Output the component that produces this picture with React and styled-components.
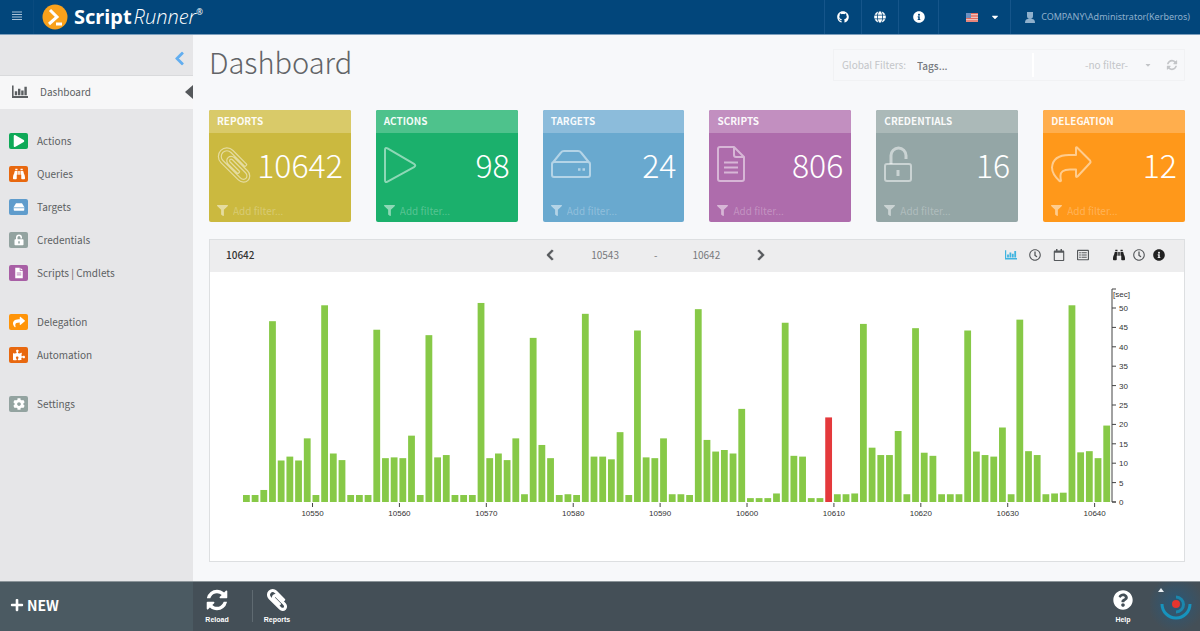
import React from "react";
import {
  FaBinoculars,
  FaCaretDown,
  FaChevronLeft,
  FaChevronRight,
  FaCog,
  FaFilter,
  FaGithub,
  FaGlobe,
  FaInfoCircle,
  FaPlay,
  FaPlus,
  FaPuzzlePiece,
  FaQuestionCircle,
  FaRegCalendar,
  FaRegClock,
  FaRegListAlt,
  FaShare,
} from "react-icons/fa";
import styled, { createGlobalStyle } from "styled-components";

const tiles = [
  { name: "Reports", count: 10642, color: "#cbb93f", head: "#d9ca69", icon: "clip" },
  { name: "Actions", count: 98, color: "#1bb06c", head: "#4ec28c", icon: "play" },
  { name: "Targets", count: 24, color: "#69a9cf", head: "#8cbcdb", icon: "disk" },
  { name: "Scripts", count: 806, color: "#ae6cac", head: "#c28fc0", icon: "file" },
  { name: "Credentials", count: 16, color: "#94a6a6", head: "#abb9b8", icon: "lock" },
  { name: "Delegation", count: 12, color: "#ff981a", head: "#ffae4d", icon: "share" },
];

// run time in seconds for every report, starting with 10542
const runs = [
  1.8, 1.8, 3.1, 46.6, 10.7, 11.7, 10.7, 16.4, 1.8, 50.7, 12.5, 10.8, 1.8, 1.8,
  1.8, 44.4, 11.3, 11.5, 11.3, 17.1, 1.8, 43, 11.5, 12.1, 1.8, 1.8, 1.8, 51.3,
  11.3, 12.5, 10.8, 16.4, 2, 42.3, 14.7, 11.3, 1.8, 2, 1.8, 48.5, 11.7, 11.7,
  11, 18, 1.8, 44.2, 11.5, 11.3, 16.4, 2, 2, 1.8, 49.7, 16, 13, 13.4, 12.5, 24,
  1, 1, 1, 2.2, 46.2, 11.9, 11.7, 1, 1, 21.8, 2, 2, 2.2, 45.9, 14, 12.1, 12.1,
  18.3, 2, 44.8, 12.7, 11.9, 2, 2, 2, 44.2, 13, 12.1, 11.7, 19.2, 2, 47, 13.1,
  12.1, 2, 2.2, 2.4, 50.7, 12.8, 13.1, 11.3, 19.7,
];
const firstRun = 10542;
const failedRun = 10609;

const Refresh = () => (
  <svg viewBox="0 0 1792 1792" width="1em" height="1em" fill="currentColor" aria-hidden="true">
    <path d="M1639 1056q0 5-1 7-64 268-268 434.5t-478 166.5q-146 0-282.5-55t-243.5-157l-129 129q-19 19-45 19t-45-19-19-45v-448q0-26 19-45t45-19h448q26 0 45 19t19 45-19 45l-137 137q71 66 161 102t187 36q134 0 250-65t186-179q11-17 53-117 8-23 30-23h192q13 0 22.5 9.5t9.5 22.5zm25-800v448q0 26-19 45t-45 19h-448q-26 0-45-19t-19-45 19-45l138-138q-148-137-349-137-134 0-250 65t-186 179q-11 17-53 117-8 23-30 23h-199q-13 0-22.5-9.5t-9.5-22.5v-7q65-268 270-434.5t480-166.5q146 0 284 55.5t245 156.5l130-129q19-19 45-19t45 19 19 45z" />
  </svg>
);

const clipPath =
  "M1596 1385q0 117-79 196t-196 79q-135 0-235-100l-777-776q-113-115-113-271 0-159 110-270t269-111q158 0 273 113l605 606q10 10 10 22 0 16-30.500 46.500t-46.500 30.500q-13 0-23-10l-606-607q-79-77-181-77-106 0-179 75t-73 181q0 105 76 181l776 777q63 63 145 63 64 0 106-42t42-106q0-82-63-145l-581-581q-26-24-60-24-29 0-48 19t-19 48q0 32 25 59l410 410q10 10 10 22 0 16-31 47t-47 31q-12 0-22-10l-410-410q-63-61-63-149 0-82 57-139t139-57q88 0 149 63l581 581q100 98 100 235z";

const Clip = () => (
  <svg viewBox="0 0 1792 1792" width="1em" height="1em" fill="currentColor" stroke="currentColor" strokeWidth="100" aria-hidden="true">
    <path d={clipPath} />
  </svg>
);

const BarChart = () => (
  <svg viewBox="0 0 20 16" width="1em" height="1em" fill="currentColor" aria-hidden="true">
    <path d="M0 0h2v13h18v2.500H0zM3.500 7h3v5h-3zM7.500 4h3v8h-3zM11.500 6h3v6h-3zM15.500 1.500h3V12h-3z" />
  </svg>
);

const Disk = () => (
  <svg viewBox="0 0 16 16" width="1em" height="1em" fill="currentColor" aria-hidden="true">
    <path d="M4 3h8l3 5v4a1 1 0 0 1-1 1H2a1 1 0 0 1-1-1V8z" />
    <path d="M1 9h14" stroke="#5f9ccc" strokeWidth="1" />
  </svg>
);

const Lock = () => (
  <svg viewBox="0 0 16 16" width="1em" height="1em" aria-hidden="true">
    <path d="M5 8V4.500a3 3 0 0 1 6 0V6" fill="none" stroke="currentColor" strokeWidth="2" />
    <rect x="2" y="7" width="12" height="8" rx="1" fill="currentColor" />
    <path d="M8 9.500v3" stroke="#93a3a0" strokeWidth="2" />
  </svg>
);

const Script = () => (
  <svg viewBox="0 0 16 16" width="1em" height="1em" fill="currentColor" aria-hidden="true">
    <path d="M3 1h6v4h4v10H3zM10 1l3 3h-3z" />
    <path d="M5 8h6M5 10.500h6" stroke="#a85fa5" strokeWidth="1" />
  </svg>
);

const outlines = {
  clip: <path d={clipPath} transform="translate(-3 -1) scale(.0224)" strokeWidth="54" />,
  play: <path d="M1 4v30q0 3 2.500 1.700L30 21.200q2.500-1.700 0-3.300L3.500 2.300Q1 1 1 4z" />,
  disk: (
    <>
      <path d="M1 18v11q0 2 2 2h34q2 0 2-2V18q0-2-2-2H3q-2 0-2 2zM1.500 17 10 6.500Q11 5 13 5h14q2 0 3 1.500L38.500 17" />
      <path d="M27 23.500h2.500M31.500 23.500H34" strokeWidth="2.500" />
    </>
  ),
  file: (
    <path d="M17 1H3Q1 1 1 3v30q0 2 2 2h22q2 0 2-2V11zM17 1v8q0 2 2 2h8M7 16.500h14M7 21.500h14M7 26.500h14" />
  ),
  lock: (
    <>
      <path d="M7 18v-8.500a7.500 7.500 0 0 1 15 0V13" strokeWidth="3" />
      <path d="M3 18h22q2 0 2 2v13q0 2-2 2H3q-2 0-2-2V20q0-2 2-2z" />
      <path d="M14 24v6" strokeWidth="3" />
    </>
  ),
  share: (
    <path d="M25 2q0-1 1-.500l13 13q1 1.500 0 2.500L26.500 30.500Q25 31.500 25 30v-6.500h-6q-10 0-9.500 7 0 2 .500 4 0 1-1.500.500Q1 28 1 21.500 2 9 18 9h7z" />
  ),
};

const Chart = () => (
  <ChartSvg viewBox="0 0 974 289" role="img" aria-label="Run time per report">
    {runs.map((sec, i) => (
      <rect
        key={i}
        x={33 + i * 8.69}
        y={230 - sec * 3.88}
        width="6.8"
        height={sec * 3.88}
        fill={firstRun + i === failedRun ? "#e4393c" : "#87c947"}
      />
    ))}
    {[10550, 10560, 10570, 10580, 10590, 10600, 10610, 10620, 10630, 10640].map((n) => {
      const x = 33 + (n - firstRun) * 8.69;
      return (
        <g key={n}>
          <path d={`M${x} 231v4`} />
          <text x={x} y="244" textAnchor="middle">
            {n}
          </text>
        </g>
      );
    })}
    <path d="M906 17H902V230H906" />
    {[0, 5, 10, 15, 20, 25, 30, 35, 40, 45, 50].map((n) => (
      <g key={n}>
        <path d={`M902 ${230 - n * 3.88}h4`} />
        <text x="909" y={233 - n * 3.88}>
          {n}
        </text>
      </g>
    ))}
    <text x="903" y="25">
      [sec]
    </text>
  </ChartSvg>
);

export default function App() {
  return (
    <Page>
      <GlobalStyle />
      <TopBar>
        <MenuButton type="button" aria-label="Menu">
          <svg viewBox="0 0 10 10" width="10" height="10" stroke="currentColor" aria-hidden="true">
            <path d="M0 1h10M0 3.500h10M0 6h10M0 8.500h10" />
          </svg>
        </MenuButton>
        <Brand href="#">
          <svg viewBox="0 0 26 26" width="26" height="26" fill="none" aria-hidden="true">
            <circle cx="13" cy="13" r="12.500" fill="#f9a11b" />
            <path d="M8 6l7 7-8 7M14 20h6" stroke="#fff" strokeWidth="3" />
          </svg>
          <BrandName>
            <b>Script</b>
            <i>Runner</i>
            <sup>®</sup>
          </BrandName>
        </Brand>
        <TopLink href="#" aria-label="GitHub"><FaGithub /></TopLink>
        <TopLink href="#" aria-label="Website"><FaGlobe /></TopLink>
        <TopLink href="#" aria-label="Info" $wide><FaInfoCircle /></TopLink>
        <Language type="button" aria-label="Language">
          <svg viewBox="0 0 12 9" width="12" height="9" aria-hidden="true">
            <path d="M0 0h12v9H0z" fill="#f4ddd8" />
            <path d="M0 .500h12M0 3h12M0 5.500h12M0 8h12" stroke="#e2695c" strokeWidth="1.300" />
            <path d="M0 0h5v5H0z" fill="#6d8fc0" />
          </svg>
          <FaCaretDown />
        </Language>
        <User>
          <svg viewBox="0 0 10 11" width="10" height="11" fill="currentColor" aria-hidden="true">
            <path d="M2 0h6v4q0 3-3 3T2 4zM0 11q0-4 3-4h4q3 0 3 4z" />
          </svg>
          COMPANY\Administrator(Kerberos)
        </User>
      </TopBar>

      <Body>
        <Sidebar>
          <Collapse type="button" aria-label="Collapse"><FaChevronLeft /></Collapse>
          <ActiveLink href="#">
            <BarChart />
            <span>Dashboard</span>
            <Marker />
          </ActiveLink>
          <NavGroup>
            <NavLink href="#"><NavIcon $color="#0fa958"><FaPlay /></NavIcon>Actions</NavLink>
            <NavLink href="#"><NavIcon $color="#e8680f"><FaBinoculars /></NavIcon>Queries</NavLink>
            <NavLink href="#"><NavIcon $color="#5f9ccc"><Disk /></NavIcon>Targets</NavLink>
            <NavLink href="#"><NavIcon $color="#93a3a0"><Lock /></NavIcon>Credentials</NavLink>
            <NavLink href="#"><NavIcon $color="#a85fa5"><Script /></NavIcon>Scripts | Cmdlets</NavLink>
          </NavGroup>
          <NavGroup>
            <NavLink href="#"><NavIcon $color="#ff9408"><FaShare /></NavIcon>Delegation</NavLink>
            <NavLink href="#"><NavIcon $color="#e8680f"><FaPuzzlePiece /></NavIcon>Automation</NavLink>
          </NavGroup>
          <NavGroup>
            <NavLink href="#"><NavIcon $color="#93a3a0"><FaCog /></NavIcon>Settings</NavLink>
          </NavGroup>
        </Sidebar>

        <Main>
          <TitleRow>
            <h1>Dashboard</h1>
            <Filters>
              <label htmlFor="tags">Global Filters:</label>
              <TagInput id="tags" placeholder="Tags..." />
              <FilterSelect aria-label="Filter" defaultValue="none">
                <option value="none">-no filter-</option>
              </FilterSelect>
              <FaCaretDown size={8} />
              <PlainButton type="button" aria-label="Refresh filters"><Refresh /></PlainButton>
            </Filters>
          </TitleRow>

          <Tiles>
            {tiles.map((tile) => (
              <Tile key={tile.name} $color={tile.color}>
                <TileHead $color={tile.head}>{tile.name}</TileHead>
                <TileBody>
                  <svg viewBox="-1 -1 42 38" width="42" height="38" aria-hidden="true">
                    {outlines[tile.icon]}
                  </svg>
                  <TileCount>{tile.count}</TileCount>
                </TileBody>
                <TileFilter>
                  <FaFilter />
                  <input placeholder="Add filter..." aria-label={`Filter ${tile.name}`} />
                </TileFilter>
              </Tile>
            ))}
          </Tiles>

          <Panel>
            <PanelHead>
              <strong>10642</strong>
              <Pager>
                <PlainButton type="button" aria-label="Previous" $color="#55585b"><FaChevronLeft /></PlainButton>
                <span>10543</span>
                <span>-</span>
                <span>10642</span>
                <PlainButton type="button" aria-label="Next" $color="#55585b"><FaChevronRight /></PlainButton>
              </Pager>
              <Tools>
                <PlainButton type="button" aria-label="Chart" $color="#3fb4e0"><BarChart /></PlainButton>
                <PlainButton type="button" aria-label="Timeline"><FaRegClock /></PlainButton>
                <PlainButton type="button" aria-label="Calendar"><FaRegCalendar /></PlainButton>
                <PlainButton type="button" aria-label="List"><FaRegListAlt /></PlainButton>
                <ToolGroup>
                  <PlainButton type="button" aria-label="Search" $color="#222"><FaBinoculars /></PlainButton>
                  <PlainButton type="button" aria-label="History"><FaRegClock /></PlainButton>
                  <PlainButton type="button" aria-label="Details" $color="#222"><FaInfoCircle /></PlainButton>
                </ToolGroup>
              </Tools>
            </PanelHead>
            <Chart />
          </Panel>
        </Main>
      </Body>

      <BottomBar>
        <NewButton type="button"><FaPlus />NEW</NewButton>
        <BarButton type="button"><Refresh />Reload</BarButton>
        <Divider />
        <BarButton type="button"><Clip />Reports</BarButton>
        <BottomEnd>
          <BarButton type="button"><FaQuestionCircle />Help</BarButton>
          <Status>
            <svg viewBox="0 0 50 49" width="50" height="49" fill="none" aria-hidden="true">
              <path d="M8 10l3-4 3 4z" fill="#e8eef2" />
              <path d="M12 22a14 14 0 0 0 28 0" stroke="#1793bd" strokeWidth="3" />
              <path d="M26 15a7 7 0 0 1 0 15" stroke="#1b87ad" strokeWidth="3" />
              <circle cx="26" cy="22" r="4" fill="#e5352f" />
            </svg>
          </Status>
        </BottomEnd>
      </BottomBar>
    </Page>
  );
}

const GlobalStyle = createGlobalStyle`
  * {
    box-sizing: border-box;
  }
  body {
    margin: 0;
    font-family: "Noto Sans CJK SC", "Noto Sans", sans-serif;
    font-size: 10px;
    line-height: 16px;
    color: #5c5f62;
  }
  button, input, select {
    font: inherit;
    color: inherit;
    border: 0;
    padding: 0;
    margin: 0;
    background: none;
  }
  button {
    cursor: pointer;
  }
  a {
    color: inherit;
    text-decoration: none;
  }
`;

const Page = styled.div`
  display: flex;
  flex-direction: column;
  min-height: 100vh;
  background: #f7f8fa;
`;

const TopBar = styled.header`
  display: flex;
  height: 35px;
  color: #fff;
  background: #02467b;
  border-bottom: 1px solid #7d9fbd;
`;

const MenuButton = styled.button`
  width: 34px;
  color: #a9c2d8;
  border-right: 1px solid #0a4b7f;
`;

const Brand = styled.a`
  display: flex;
  align-items: center;
  gap: 6px;
  margin-right: auto;
  padding-left: 8px;
`;

const BrandName = styled.span`
  font-family: "Noto Sans", sans-serif;
  font-size: 20px;
  line-height: 32px;

  i {
    font-family: "Open Sans", "Noto Sans", sans-serif;
    font-weight: 300;
    margin-left: 2px;
  }
  sup {
    font-size: 8px;
    line-height: 8px;
    vertical-align: 9px;
  }
`;

const TopLink = styled.a`
  display: flex;
  align-items: center;
  justify-content: center;
  width: ${(p) => (p.$wide ? 40 : 37)}px;
  font-size: 12px;
  border-left: 1px solid #15558a;
`;

const Language = styled.button`
  display: flex;
  align-items: center;
  justify-content: center;
  gap: 12px;
  width: 72px;
  padding-left: 16px;
  border-left: 1px solid #15558a;
`;

const User = styled.div`
  display: flex;
  align-items: center;
  gap: 6px;
  padding: 0 10px 0 14px;
  font-family: "Noto Sans", sans-serif;
  font-size: 9px;
  color: #8fb0cc;
  border-left: 1px solid #15558a;
`;

const Body = styled.div`
  display: flex;
  flex: 1;
`;

const Sidebar = styled.nav`
  flex: 0 0 193px;
  background: #e6e6e8;
`;

const Collapse = styled.button`
  display: flex;
  align-items: center;
  justify-content: flex-end;
  width: 100%;
  height: 41px;
  padding: 6px 6px 0 0;
  font-size: 15px;
  color: #62aef0;
  border-bottom: 1px solid #d9dadc;

  path {
    stroke: currentColor;
    stroke-width: 24;
  }
`;

const ActiveLink = styled.a`
  display: flex;
  align-items: center;
  gap: 12px;
  height: 33px;
  padding: 0 0 2px 12px;
  background: #f7f7f8;

  svg {
    font-size: 16px;
  }
`;

const Marker = styled.span`
  margin-left: auto;
  border: solid transparent;
  border-width: 7px 8px 7px 0;
  border-right-color: #55585b;
`;

const NavGroup = styled.div`
  padding-top: 16px;

  &:first-of-type {
    padding-top: 15px;
  }
`;

const NavLink = styled.a`
  display: flex;
  align-items: center;
  gap: 9px;
  height: 33px;
  padding-left: 9px;
`;

const NavIcon = styled.span`
  display: flex;
  align-items: center;
  justify-content: center;
  width: 19px;
  height: 16px;
  font-size: 12px;
  color: #fff;
  background: ${(p) => p.$color};
  border-radius: 2px;
`;

const Main = styled.main`
  flex: 1;
  min-width: 0;
  padding: 0 15px 19px 16px;
`;

const TitleRow = styled.div`
  display: flex;
  align-items: flex-start;
  justify-content: space-between;
  height: 75px;

  h1 {
    margin: 7px 0 0;
    font-size: 29px;
    font-weight: 300;
    line-height: 38px;
    color: #626467;
  }
`;

const Filters = styled.div`
  display: flex;
  align-items: center;
  height: 32px;
  margin-top: 14px;
  padding: 0 6px 0 8px;
  color: #c3c5c8;
  border: 1px solid #f1f2f4;
`;

const TagInput = styled.input`
  width: 117px;
  height: 24px;
  margin-left: 11px;
  border-right: 2px solid #fff;

  &::placeholder {
    font-weight: 500;
    color: #76797d;
    opacity: 1;
  }
`;

const FilterSelect = styled.select`
  width: 110px;
  padding-right: 16px;
  appearance: none;
  text-align: right;
  text-align-last: right;
`;

const PlainButton = styled.button`
  display: flex;
  font-size: 12px;
  color: ${(p) => p.$color || "inherit"};

  ${Filters} & {
    margin-left: 14px;
  }
`;

const Tiles = styled.div`
  display: grid;
  grid-template-columns: repeat(6, 1fr);
  gap: 25px;
`;

const Tile = styled.section`
  height: 112px;
  overflow: hidden;
  color: #fff;
  background: ${(p) => p.$color};
  border-radius: 2px;
`;

const TileHead = styled.h2`
  margin: 0;
  padding: 0 8px 2px;
  font-size: 10px;
  line-height: 21px;
  text-transform: uppercase;
  color: #fffffff0;
  background: ${(p) => p.$color};
`;

const TileBody = styled.div`
  display: flex;
  align-items: center;
  justify-content: space-between;
  height: 66px;
  padding: 0 8px 4px 7px;

  svg {
    flex: none;
    fill: none;
    stroke: #ffffff80;
    stroke-width: 2;
    stroke-linejoin: round;
  }
`;

const TileCount = styled.span`
  margin-left: -10px;
  font-size: 32px;
  font-weight: 300;
  line-height: 40px;
`;

const TileFilter = styled.div`
  display: flex;
  align-items: center;
  gap: 5px;
  height: 23px;
  padding: 0 8px;
  color: #ffffff80;

  svg {
    flex: none;
    font-size: 11px;
  }
  input {
    width: 100%;
    min-width: 0;
  }
  input::placeholder {
    color: #ffffff44;
    opacity: 1;
  }
`;

const Panel = styled.section`
  margin-top: 17px;
  background: #fff;
  border: 1px solid #dddfe1;
`;

const PanelHead = styled.div`
  display: grid;
  grid-template-columns: 4fr auto 5fr;
  align-items: center;
  height: 32px;
  padding: 0 19px 2px 16px;
  color: #55585b;
  background: #ededee;

  strong {
    font-weight: 500;
    color: #333;
  }
`;

const Pager = styled.div`
  display: flex;
  align-items: center;
  gap: 35px;
  color: #77797c;

  path {
    stroke: currentColor;
    stroke-width: 24;
  }
`;

const Tools = styled.div`
  display: flex;
  align-items: center;
  justify-content: flex-end;
  gap: 12px;
`;

const ToolGroup = styled.div`
  display: flex;
  gap: 8px;
  margin-left: 12px;
`;

const ChartSvg = styled.svg`
  display: block;
  width: 100%;

  path {
    fill: none;
    stroke: #444;
  }
  text {
    font-family: "Liberation Sans", sans-serif;
    font-size: 8px;
    fill: #333;
  }
`;

const BottomBar = styled.footer`
  display: flex;
  height: 50px;
  color: #fff;
  background: #444f57;
  border-top: 1px solid #8b9499;
`;

const NewButton = styled.button`
  display: flex;
  align-items: center;
  gap: 3px;
  width: 193px;
  padding: 0 0 3px 10px;
  font-size: 14px;
  font-weight: 700;
  background: #4b5a62;
`;

const BarButton = styled.button`
  display: flex;
  flex-direction: column;
  align-items: center;
  justify-content: center;
  gap: 2px;
  width: 48px;
  font-family: "Liberation Sans", sans-serif;
  font-size: 7px;
  font-weight: 700;
  line-height: 12px;

  svg {
    font-size: 24px;
  }
`;

const Divider = styled.span`
  width: 1px;
  height: 32px;
  margin: 8px 0 0 11px;
  background: #5f6a71;
`;

const BottomEnd = styled.div`
  display: flex;
  margin-left: auto;

  ${BarButton} svg {
    font-size: 20px;
    margin: 2px 0;
  }
`;

const Status = styled.div`
  width: 50px;
  margin-left: 3px;
  background: radial-gradient(circle at 26px 22px, #2a5878, #444f5700 28px);
`;
